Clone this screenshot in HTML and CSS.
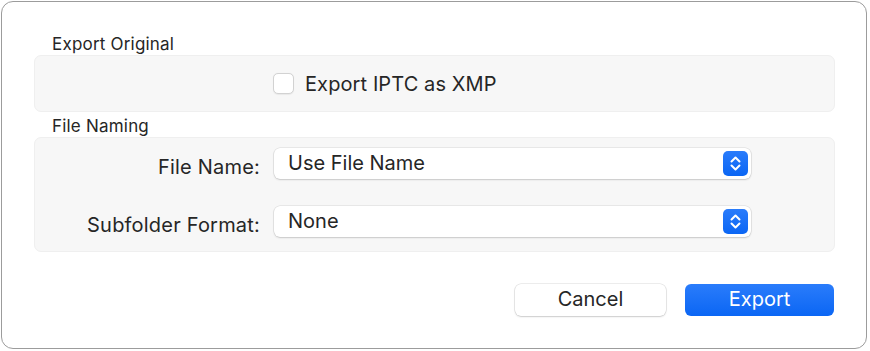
FILE: index.html
```html
<!DOCTYPE html>
<html lang="en">
  <head>
    <meta charset="UTF-8" />
    <meta name="viewport" content="width=device-width, initial-scale=1.0" />
    <title>Export</title>
    <link rel="stylesheet" href="styles.css">
  </head>
  <body>
    <div class="window">
      <div class="group-label">Export Original</div>
      <div class="group group-original">
        <label class="check">
          <span class="checkbox"></span>
          <span>Export IPTC as XMP</span>
        </label>
      </div>

      <div class="group-label">File Naming</div>
      <div class="group group-naming">
        <div class="row-label">File Name:</div>
        <div class="popup">
          <span>Use File Name</span>
          <span class="stepper">
            <svg width="25" height="25" viewBox="0 0 25 25">
              <path d="M8.5 10.5 L12.5 6.5 L16.5 10.5" />
              <path d="M8.5 14.5 L12.5 18.5 L16.5 14.5" />
            </svg>
          </span>
        </div>
        <div class="row-label">Subfolder Format:</div>
        <div class="popup">
          <span>None</span>
          <span class="stepper">
            <svg width="25" height="25" viewBox="0 0 25 25">
              <path d="M8.5 10.5 L12.5 6.5 L16.5 10.5" />
              <path d="M8.5 14.5 L12.5 18.5 L16.5 14.5" />
            </svg>
          </span>
        </div>
      </div>

      <div class="buttons">
        <button class="btn btn-cancel">Cancel</button>
        <button class="btn btn-export">Export</button>
      </div>
    </div>
  </body>
</html>
```

FILE: styles.css
```css
body {
  margin: 0;
  padding: 1px;
  background-color: #ffffff;
  font-family: Inter, "Liberation Sans", sans-serif;
  color: #262626;
}
.window {
  width: 866px;
  height: 348px;
  box-sizing: border-box;
  border: 1px solid #9c9c9c;
  border-radius: 12px;
  background-color: #ffffff;
  padding: 32px 31px 0 32px;
  display: flex;
  flex-direction: column;
}
.group-label {
  font-size: 17px;
  line-height: 20px;
  margin-left: 18px;
  height: 21px;
  letter-spacing: 0.2px;
}
.group {
  background-color: #f7f7f7;
  border: 1px solid #efefef;
  border-radius: 7px;
  box-sizing: border-box;
}
.group-original {
  height: 57px;
  margin-bottom: 4px;
  display: flex;
  align-items: center;
  padding-left: 238px;
}
.check {
  display: flex;
  align-items: center;
  gap: 11px;
  font-size: 20px;
  letter-spacing: 0.1px;
}
.checkbox {
  width: 21px;
  height: 21px;
  box-sizing: border-box;
  border: 1px solid #d2d2d2;
  border-radius: 5px;
  background-color: #ffffff;
  box-shadow: 0 0.5px 1px rgba(0, 0, 0, 0.06);
}
.group-naming {
  height: 115px;
  padding-top: 10px;
  display: grid;
  grid-template-columns: 225px 477px;
  grid-template-rows: 31px 31px;
  column-gap: 14px;
  row-gap: 27px;
  align-items: center;
}
.row-label {
  text-align: right;
  font-size: 20px;
  letter-spacing: 0.2px;
  padding-top: 6px;
}
.popup {
  height: 31px;
  box-sizing: border-box;
  background-color: #ffffff;
  border-radius: 6px;
  box-shadow: 0 0 0 0.5px rgba(0, 0, 0, 0.12), 0 1px 2px rgba(0, 0, 0, 0.14);
  display: flex;
  align-items: center;
  justify-content: space-between;
  padding: 0 3px 2px 14px;
  font-size: 20px;
}
.stepper {
  width: 25px;
  height: 25px;
  margin-top: 2px;
  border-radius: 5px;
  background: linear-gradient(#2a7cfb, #0b66f4);
  display: flex;
}
.stepper path {
  fill: none;
  stroke: #ffffff;
  stroke-width: 2;
  stroke-linecap: round;
  stroke-linejoin: round;
}
.buttons {
  display: flex;
  justify-content: flex-end;
  gap: 19px;
  margin-top: 32px;
  margin-right: 1px;
}
.btn {
  height: 32px;
  font-family: Inter, "Liberation Sans", sans-serif;
  font-size: 20px;
  border-radius: 6px;
  border: none;
  padding: 0 0 2px;
}
.btn-cancel {
  width: 151px;
  background-color: #ffffff;
  color: #262626;
  box-shadow: 0 0 0 0.5px rgba(0, 0, 0, 0.14), 0 1px 2px rgba(0, 0, 0, 0.14);
}
.btn-export {
  width: 149px;
  color: #ffffff;
  background: linear-gradient(#2a7cfb, #0b66f4);
}
```
